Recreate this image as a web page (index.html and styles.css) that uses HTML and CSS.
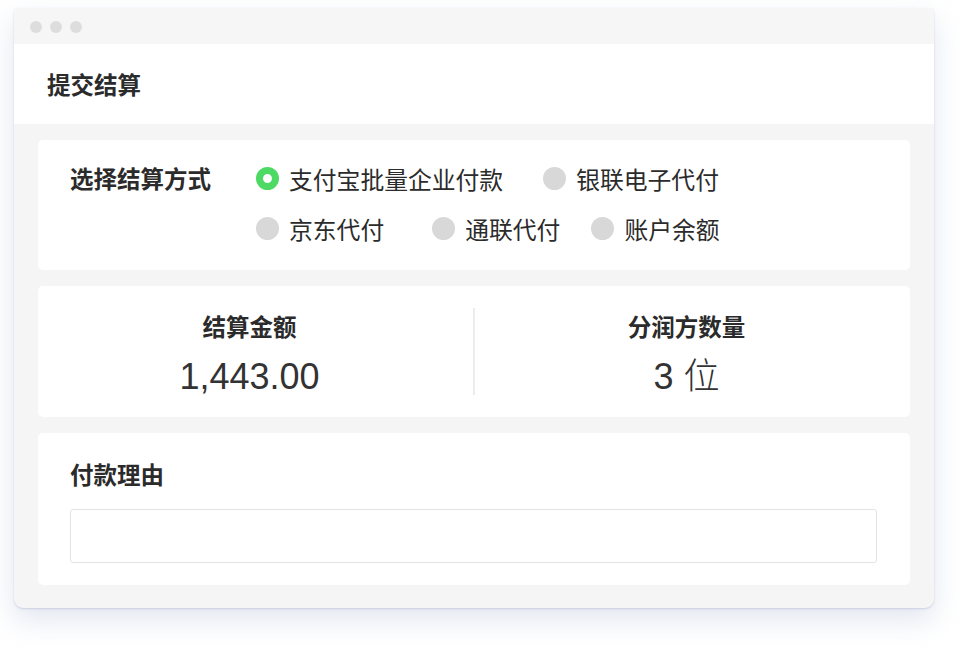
FILE: index.html
```html
<!DOCTYPE html>
<html lang="zh-CN">
<head>
<meta charset="utf-8">
<title>提交结算</title>
<link rel="stylesheet" href="styles.css">
</head>
<body>
<div class="window">
  <div class="titlebar">
    <span class="dot"></span><span class="dot"></span><span class="dot"></span>
  </div>
  <div class="header">提交结算</div>
  <div class="content">
    <section class="card method">
      <div class="method-label">选择结算方式</div>
      <div class="options">
        <div class="opt-row">
          <label class="opt opt-gap40"><span class="radio checked"></span>支付宝批量企业付款</label>
          <label class="opt"><span class="radio"></span>银联电子代付</label>
        </div>
        <div class="opt-row">
          <label class="opt opt-gap49"><span class="radio"></span>京东代付</label>
          <label class="opt opt-gap34"><span class="radio"></span>通联代付</label>
          <label class="opt"><span class="radio"></span>账户余额</label>
        </div>
      </div>
    </section>
    <section class="card stats">
      <div class="stat">
        <div class="stat-label">结算金额</div>
        <div class="stat-value">1,443.00</div>
      </div>
      <div class="divider"></div>
      <div class="stat">
        <div class="stat-label">分润方数量</div>
        <div class="stat-value">3 位</div>
      </div>
    </section>
    <section class="card reason">
      <div class="reason-label">付款理由</div>
      <div class="input"></div>
    </section>
  </div>
</div>
</body>
</html>
```

FILE: styles.css
```css
* { box-sizing: border-box; }
html, body { margin: 0; background: #ffffff; }
body {
  padding: 8px 34px 40px 14px;
  font-family: "Liberation Sans", "Noto Sans CJK SC", sans-serif;
  color: #333333;
}
.window {
  width: 920px;
  height: 600px;
  background: #f5f5f5;
  border-radius: 4px 4px 9px 9px;
  overflow: hidden;
  box-shadow: 0 1px 2px rgba(140, 150, 185, 0.35), 0 12px 28px rgba(165, 178, 210, 0.32);
  display: flex;
  flex-direction: column;
}
.titlebar {
  height: 36px;
  background: #f6f6f6;
  display: flex;
  align-items: center;
  gap: 8px;
  padding: 1px 0 0 16px;
}
.dot {
  width: 12px;
  height: 12px;
  border-radius: 50%;
  background: #dddddd;
}
.header {
  height: 80px;
  background: #ffffff;
  display: flex;
  align-items: center;
  padding-left: 33px;
  font-family: "Noto Sans CJK SC", sans-serif;
  font-size: 23.5px;
  font-weight: 600;
  color: #2b2b2b;
}
.content {
  flex: 1;
  padding: 16px 24px 23px;
  display: flex;
  flex-direction: column;
  gap: 16px;
}
.card {
  background: #ffffff;
  border-radius: 5px;
}
.method {
  display: flex;
  padding: 13px 32px 17px;
}
.method-label {
  width: 186px;
  line-height: 50px;
  font-family: "Noto Sans CJK SC", sans-serif;
  font-size: 23.5px;
  font-weight: 600;
  color: #2b2b2b;
}
.options { display: flex; flex-direction: column; }
.opt-row { display: flex; height: 50px; align-items: center; }
.opt {
  display: flex;
  align-items: center;
  gap: 10px;
  font-family: "Noto Sans CJK SC", sans-serif;
  font-size: 23.8px;
  color: #2b2b2b;
}
.opt-gap40 { margin-right: 40px; }
.opt-gap49 { margin-right: 48px; }
.opt-gap34 { margin-right: 31px; }
.radio {
  width: 23px;
  height: 23px;
  border-radius: 50%;
  background: #d8d8d8;
  flex: none;
}
.radio.checked {
  background: #ffffff;
  border: 7.5px solid #4cd964;
}
.stats {
  height: 131px;
  display: flex;
  align-items: center;
}
.stat {
  flex: 1;
  height: 100%;
  padding: 23px 12px 0 0;
  display: flex;
  flex-direction: column;
  align-items: center;
}
.stat-label {
  line-height: 34px;
  font-family: "Noto Sans CJK SC", sans-serif;
  font-size: 23.5px;
  font-weight: 600;
  color: #2b2b2b;
}
.stat-value {
  margin-top: 10px;
  line-height: 48px;
  font-size: 36px;
  font-weight: 300;
  color: #333333;
}
.divider {
  width: 2px;
  height: 87px;
  background: #ececec;
  flex: none;
}
.reason {
  padding: 24px 32px 22px;
}
.reason-label {
  line-height: 34px;
  font-family: "Noto Sans CJK SC", sans-serif;
  font-size: 23.5px;
  font-weight: 600;
  color: #2b2b2b;
}
.input {
  margin-top: 18px;
  height: 54px;
  border: 1px solid #e3e3e3;
  border-radius: 3px;
  margin-right: 1px;
}
```
